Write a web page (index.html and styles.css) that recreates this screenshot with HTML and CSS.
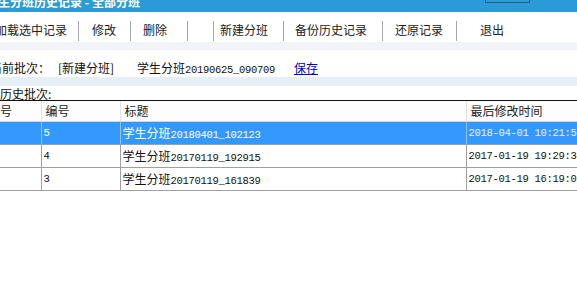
FILE: index.html
```html
<!DOCTYPE html>
<html lang="zh-CN">
<head>
  <meta charset="UTF-8">
  <title>学生分班历史记录 - 全部分班</title>
  <link rel="stylesheet" href="styles.css">
</head>
<body>
  <div class="titlebar">
    <span class="title">学生分班历史记录 - 全部分班</span>
    <span class="winbtn"></span>
  </div>

  <div class="toolbar">
    <span class="tool tool-load">加载选中记录</span>
    <span class="tool tool-edit">修改</span>
    <span class="tool tool-del">删除</span>
    <span class="tool tool-blank"></span>
    <span class="tool tool-new">新建分班</span>
    <span class="tool tool-backup">备份历史记录</span>
    <span class="tool tool-restore">还原记录</span>
    <span class="tool tool-quit">退出</span>
  </div>
  <div class="band-top"></div>

  <div class="current">
    <span class="current-label">当前批次：</span>
    <span class="current-tag">[新建分班]</span>
    <span class="current-name">学生分班<span class="num">20190625_090709</span></span>
    <a class="save-link" href="#">保存</a>
  </div>
  <div class="band"></div>

  <div class="history-label">历史批次:</div>

  <table class="grid">
    <colgroup>
      <col class="c-seq">
      <col class="c-id">
      <col class="c-title">
      <col class="c-time">
    </colgroup>
    <thead>
      <tr>
        <th>序号</th>
        <th>编号</th>
        <th>标题</th>
        <th>最后修改时间</th>
      </tr>
    </thead>
    <tbody>
      <tr class="selected">
        <td></td>
        <td class="num">5</td>
        <td>学生分班<span class="num">20180401_102123</span></td>
        <td class="num">2018-04-01 10:21:58</td>
      </tr>
      <tr>
        <td></td>
        <td class="num">4</td>
        <td>学生分班<span class="num">20170119_192915</span></td>
        <td class="num">2017-01-19 19:29:34</td>
      </tr>
      <tr>
        <td></td>
        <td class="num">3</td>
        <td>学生分班<span class="num">20170119_161839</span></td>
        <td class="num">2017-01-19 16:19:01</td>
      </tr>
    </tbody>
  </table>
</body>
</html>
```

FILE: styles.css
```css
* {
  box-sizing: border-box;
}
body {
  margin: 0;
  width: 577px;
  height: 307px;
  overflow: hidden;
  background: #fff;
  color: #111;
  font-family: "Noto Sans CJK SC", sans-serif;
  font-size: 12px;
}
.num {
  font-family: "Liberation Mono", "DejaVu Sans Mono", monospace;
  font-size: 10.5px;
  letter-spacing: -0.3px;
}

/* title bar */
.titlebar {
  height: 12px;
  background: #2a9bd6;
  display: flex;
  align-items: flex-start;
  overflow: hidden;
}
.title {
  margin-left: -14px;
  margin-top: -5px;
  line-height: 14px;
  color: #fff;
  font-weight: bold;
  font-size: 12px;
  white-space: nowrap;
}
.winbtn {
  margin-left: 345px;
  width: 45px;
  height: 3px;
  border: 1px solid #2f5d78;
  border-top: none;
}

/* toolbar */
.toolbar {
  height: 30px;
  padding-top: 9px;
  display: flex;
  align-items: flex-start;
  background: #fff;
  white-space: nowrap;
}
.tool {
  flex: none;
  height: 20px;
  line-height: 18px;
  border-right: 1px solid #a8a8a8;
  color: #222;
}
.tool-load { margin-left: -16px; width: 95px; padding-left: 11px; }
.tool-edit { width: 52px; padding-left: 13px; }
.tool-del { width: 57px; padding-left: 12px; }
.tool-blank { width: 26px; }
.tool-new { width: 70px; padding-left: 6px; }
.tool-backup { width: 99px; padding-left: 11px; }
.tool-restore { width: 74px; padding-left: 12px; }
.tool-quit { width: 70px; padding-left: 23px; border-right: none; }

.band-top {
  height: 8px;
  background: #f2f4f7;
}

/* current batch */
.current {
  height: 27px;
  padding-top: 10px;
  display: flex;
  line-height: 16px;
  white-space: nowrap;
}
.current-label {
  margin-left: -10px;
  width: 68px;
}
.current-tag {
  width: 79px;
}
.current-name {
  width: 157px;
}
.save-link {
  color: #0000cc;
  text-decoration: underline;
}
.band {
  height: 9px;
  background: #e8eef5;
}
.history-label {
  height: 15px;
  line-height: 15px;
  border-bottom: 1px solid #111;
}

/* history grid */
.grid {
  margin-left: -16px;
  width: 720px;
  border-collapse: collapse;
  table-layout: fixed;
}
.c-seq { width: 57px; }
.c-id { width: 79px; }
.c-title { width: 346px; }
.c-time { width: 238px; }
.grid th {
  height: 20px;
  padding: 0 0 0 4px;
  text-align: left;
  font-weight: normal;
  color: #222;
  background: #fdfdfd;
  border-right: 1px solid #e2e2e2;
  border-bottom: 1px solid #d4d4d4;
  line-height: 19px;
}
.grid td {
  height: 23px;
  padding: 0 0 0 2px;
  border-right: 1px solid #a0a0a0;
  border-bottom: 1px solid #a0a0a0;
  white-space: nowrap;
  overflow: hidden;
}
.grid tr.selected td {
  background: #3399ff;
  color: #fff;
  border-right-color: #8fc2f0;
}
.grid tr.selected td:last-child {
  color: #e8f2ff;
}
```
